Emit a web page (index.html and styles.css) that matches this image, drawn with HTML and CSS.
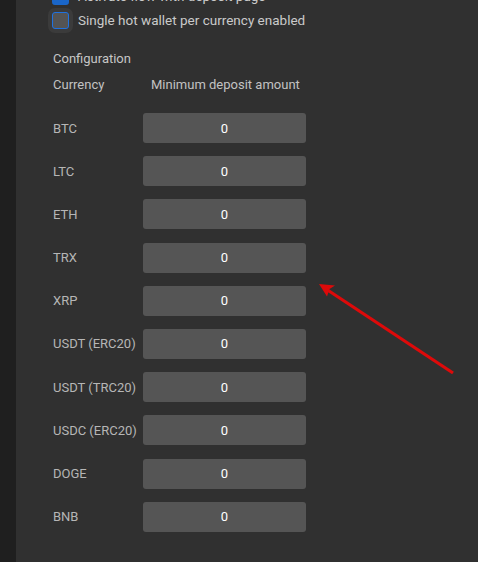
FILE: index.html
```html
<!DOCTYPE html>
<html lang="en">
<head>
<meta charset="utf-8">
<title>Configuration</title>
<link rel="stylesheet" href="styles.css">
</head>
<body>
<div class="app">
  <aside class="rail"></aside>
  <main class="panel">
    <label class="check-row first">
      <span class="box checked"><svg viewBox="0 0 16 16" width="12" height="12"><path d="M3 8.5l3 3 7-7" fill="none" stroke="#fff" stroke-width="2"/></svg></span>
      <span class="check-text">Activate flow with deposit page</span>
    </label>
    <label class="check-row">
      <span class="box focused"></span>
      <span class="check-text">Single hot wallet per currency enabled</span>
    </label>

    <div class="section-title">Configuration</div>
    <div class="table-head">
      <span class="col-cur">Currency</span>
      <span class="col-min">Minimum deposit amount</span>
    </div>
    <div class="rows">
      <div class="row"><span class="cur">BTC</span><div class="field">0</div></div>
      <div class="row"><span class="cur">LTC</span><div class="field">0</div></div>
      <div class="row"><span class="cur">ETH</span><div class="field">0</div></div>
      <div class="row"><span class="cur">TRX</span><div class="field">0</div></div>
      <div class="row"><span class="cur">XRP</span><div class="field">0</div></div>
      <div class="row"><span class="cur">USDT (ERC20)</span><div class="field">0</div></div>
      <div class="row"><span class="cur">USDT (TRC20)</span><div class="field">0</div></div>
      <div class="row"><span class="cur">USDC (ERC20)</span><div class="field">0</div></div>
      <div class="row"><span class="cur">DOGE</span><div class="field">0</div></div>
      <div class="row"><span class="cur">BNB</span><div class="field">0</div></div>
    </div>
  </main>
  <svg class="arrow" width="478" height="562" viewBox="0 0 478 562">
    <line x1="453" y1="373" x2="326" y2="289" stroke="#dd0a0a" stroke-width="3.2" stroke-linecap="butt"/>
    <path d="M319 284 L335 285.5 L329.5 289 L327 296.5 Z" fill="#dd0a0a"/>
  </svg>
</div>
</body>
</html>
```

FILE: styles.css
```css
html, body {
  margin: 0;
  padding: 0;
  height: 100%;
  overflow: hidden;
}
body {
  background: #303030;
  font-family: Roboto, "Liberation Sans", Arial, sans-serif;
  font-size: 13px;
  color: #c4c4c4;
}
.app {
  display: flex;
  height: 562px;
  position: relative;
  overflow: hidden;
}
.rail {
  width: 16px;
  flex: 0 0 16px;
  background: #1f1f1f;
}
.panel {
  flex: 1;
  padding-left: 37px;
  display: flex;
  flex-direction: column;
}
.check-row {
  display: flex;
  align-items: center;
  height: 24px;
  gap: 9px;
}
.check-row.first {
  margin-top: -16px;
}
.box {
  box-sizing: border-box;
  width: 17px;
  height: 17px;
  margin-left: -1px;
  border-radius: 3px;
  display: flex;
  align-items: center;
  justify-content: center;
}
.box.checked {
  background: #1a66c9;
  border: 2px solid #1a66c9;
}
.box.focused {
  background: #545454;
  border: 1.5px solid #1f72e0;
  box-shadow: 0 0 0 4px #3b3b3b;
}
.check-text {
  color: #cacaca;
  font-size: 13.5px;
  line-height: 16px;
}
.section-title {
  margin-top: 19px;
  line-height: 16px;
  color: #c6c6c6;
}
.table-head {
  display: flex;
  margin-top: 10px;
  line-height: 16px;
  color: #c2c2c2;
}
.col-cur {
  width: 90px;
}
.col-min {
  padding-left: 8px;
}
.rows {
  margin-top: 20px;
  display: flex;
  flex-direction: column;
  gap: 13.2px;
}
.row {
  display: flex;
  align-items: center;
  height: 30px;
}
.cur {
  width: 90px;
  color: #b6b6b6;
}
.field {
  width: 163px;
  height: 30px;
  background: #555555;
  border-radius: 3px;
  display: flex;
  align-items: center;
  justify-content: center;
  color: #ffffff;
  font-weight: 400;
}
.arrow {
  position: absolute;
  left: 0;
  top: 0;
  pointer-events: none;
}
```
